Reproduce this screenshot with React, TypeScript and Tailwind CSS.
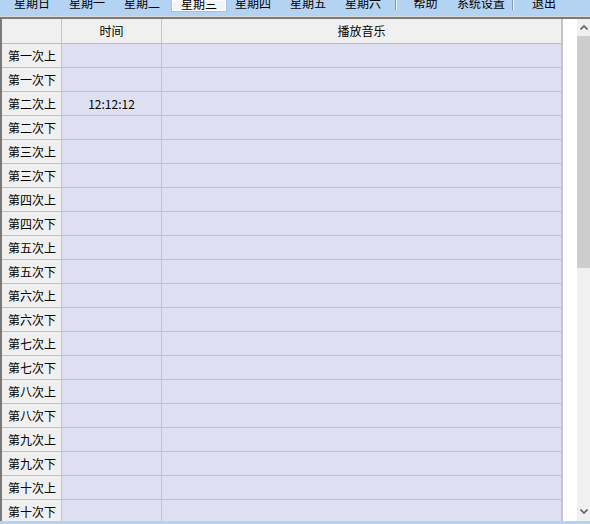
import React from "react";

const rows = [
  "第一次上","第一次下","第二次上","第二次下","第三次上","第三次下","第四次上","第四次下","第五次上","第五次下",
  "第六次上","第六次下","第七次上","第七次下","第八次上","第八次下","第九次上","第九次下","第十次上","第十次下",
];

function Tab({ label, w, active }: { label: string; w: string; active?: boolean }) {
  return (
    <div className={`${w} h-[11px] flex justify-center overflow-visible`}>
      <div
        className={
          active
            ? "w-full h-[11px] bg-[#f4f4f4] border border-[#ffffff] outline outline-1 outline-[#9cc3ea] flex justify-center"
            : "w-full h-[11px] flex justify-center"
        }
      >
        <span className="block leading-[12px] text-[12px] -mt-[3px] text-black whitespace-nowrap">{label}</span>
      </div>
    </div>
  );
}

function Sep({ ml }: { ml: string }) {
  return (
    <div className={`${ml} flex h-[10px]`}>
      <div className="w-px h-full bg-[#8a98a8]" />
      <div className="w-px h-full bg-[#e8f2fc]" />
    </div>
  );
}

export default function App() {
  return (
    <div
      className="w-[590px] h-[524px] overflow-hidden bg-[#b4d3f2] flex flex-col"
      style={{ fontFamily: '"Noto Sans CJK SC", "Noto Sans", sans-serif' }}
    >
      <div className="h-[16px] flex items-start pl-[5px] overflow-hidden shrink-0">
        <Tab label="星期日" w="w-[54px]" />
        <Tab label="星期一" w="w-[56px]" />
        <Tab label="星期二" w="w-[54px]" />
        <div className="w-[3px]" />
        <Tab label="星期三" w="w-[54px]" active />
        <Tab label="星期四" w="w-[54px]" />
        <Tab label="星期五" w="w-[56px]" />
        <Tab label="星期六" w="w-[54px]" />
        <Sep ml="ml-[5px]" />
        <Tab label="帮助" w="w-[57px]" />
        <Tab label="系统设置" w="w-[54px]" />
        <Sep ml="ml-[4px]" />
        <Tab label="退出" w="w-[60px]" />
      </div>
      <div className="h-px bg-[#d8d8d8] shrink-0" />
      <div className="h-[2px] bg-[#7a7a7a] shrink-0" />
      <div className="h-[502px] flex bg-white shrink-0 overflow-hidden">
        <div className="w-[2px] bg-[#7a7a7a] shrink-0" />
        <div className="w-[561px] shrink-0 flex flex-col text-[12px] text-black">
          <div className="h-[25px] flex shrink-0 bg-[#f0f0f0] border-b border-[#bdbdbd]">
            <div className="w-[60px] border-r border-[#c4c4c4]" />
            <div className="w-[100px] border-r border-[#c4c4c4] flex items-center justify-center">时间</div>
            <div className="w-[401px] border-r-2 border-[#c4c4c4] flex items-center justify-center">播放音乐</div>
          </div>
          {rows.map((r, i) => (
            <div key={i} className="h-[24px] flex shrink-0 border-b border-[#c0c0c8]">
              <div className="w-[60px] bg-[#f0f0f0] border-r border-[#c4c4c4] flex items-center pl-[6px]">{r}</div>
              <div className="w-[100px] bg-[#dfdff2] border-r border-[#c4c4c4] flex items-center justify-center">
                {i === 2 ? "12:12:12" : ""}
              </div>
              <div className="w-[401px] bg-[#dfdff2] border-r-2 border-[#c4c4d0]" />
            </div>
          ))}
        </div>
        <div className="w-[14px] shrink-0 bg-white" />
        <div className="w-[13px] shrink-0 bg-[#f0f0f0] flex flex-col">
          <div className="h-[17px] flex items-center justify-center">
            <svg width="8" height="5" viewBox="0 0 8 5">
              <path d="M0.5 4.5 L4 1 L7.5 4.5" fill="none" stroke="#606060" strokeWidth="1.6" />
            </svg>
          </div>
          <div className="h-[232px] bg-[#cdcdcd]" />
          <div className="flex-1" />
          <div className="h-[17px] flex items-center justify-center mb-[1px]">
            <svg width="8" height="5" viewBox="0 0 8 5">
              <path d="M0.5 0.5 L4 4 L7.5 0.5" fill="none" stroke="#606060" strokeWidth="1.6" />
            </svg>
          </div>
        </div>
      </div>
      <div className="flex-1 bg-[#b4d3f2]" />
    </div>
  );
}
